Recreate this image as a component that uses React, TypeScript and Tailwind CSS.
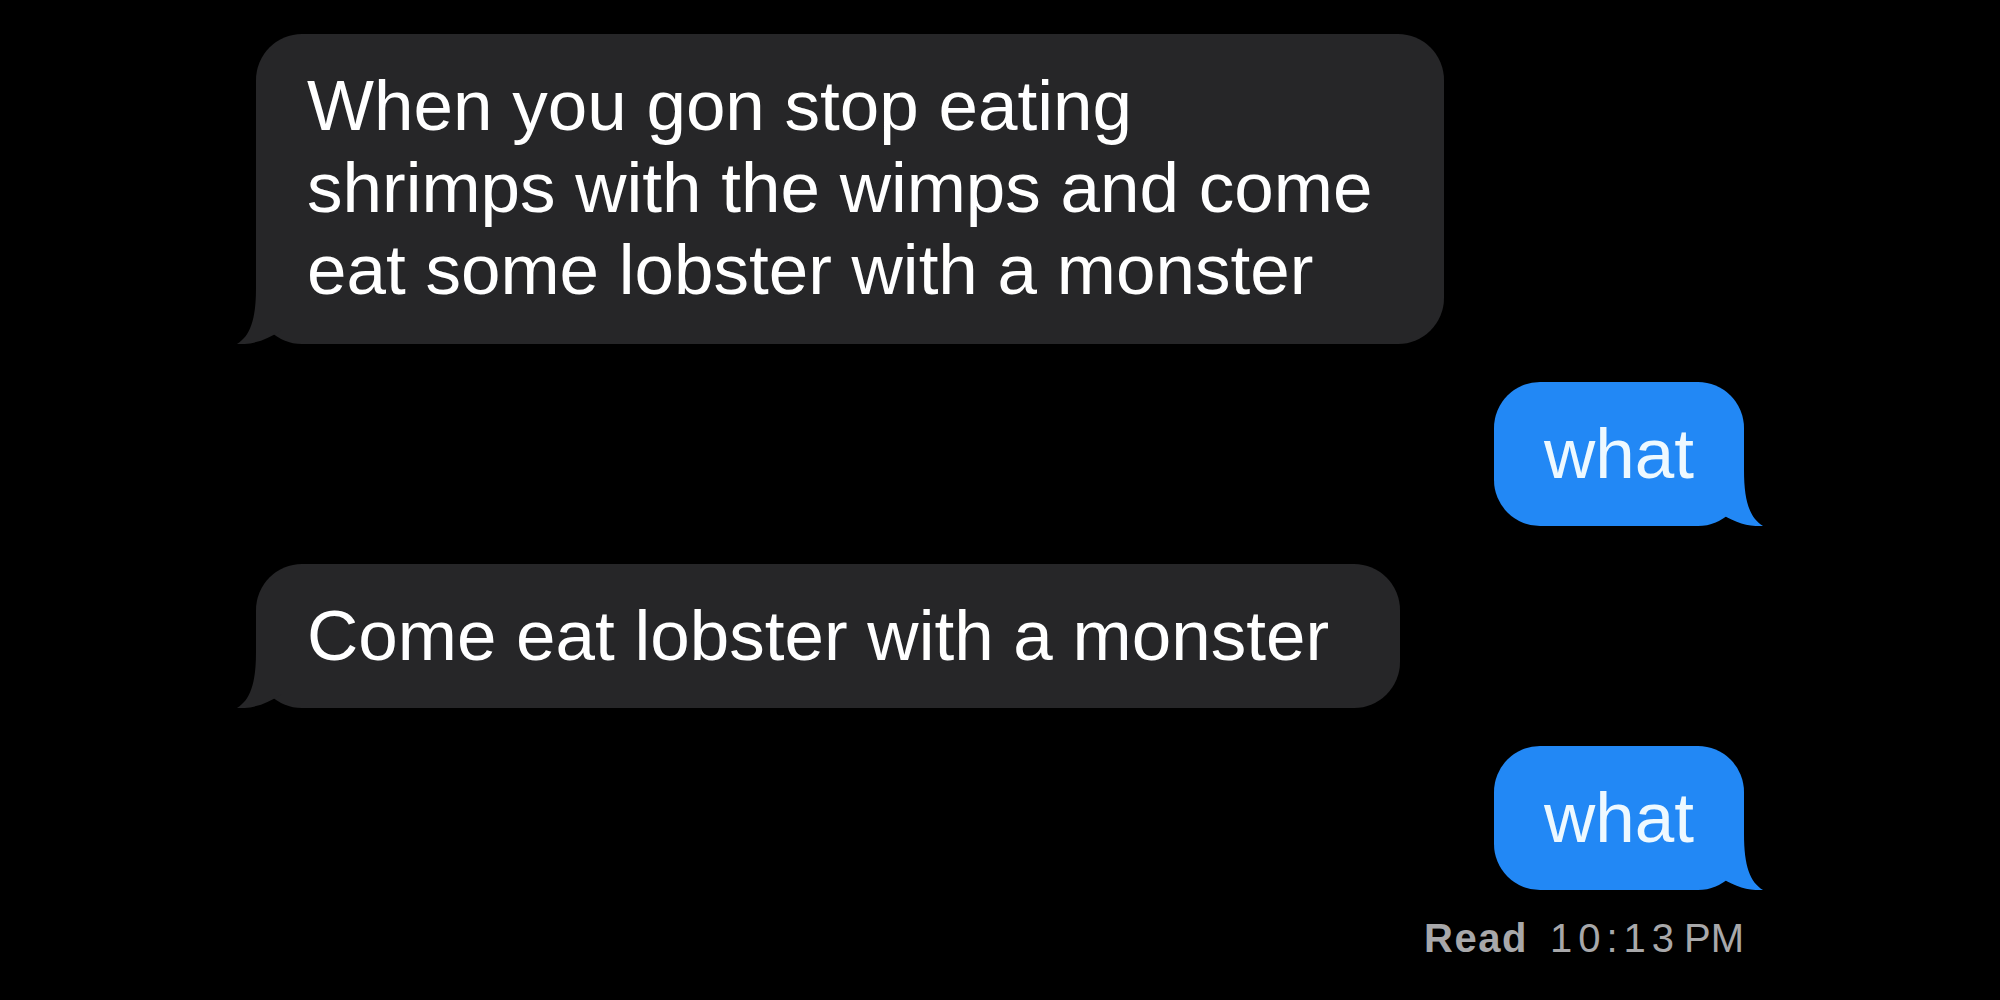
import React from "react";

type Msg = { from: "them" | "me"; lines: string[] };

const messages: Msg[] = [
  {
    from: "them",
    lines: [
      "When you gon stop eating",
      "shrimps with the wimps and come",
      "eat some lobster with a monster",
    ],
  },
  { from: "me", lines: ["what"] },
  { from: "them", lines: ["Come eat lobster with a monster"] },
  { from: "me", lines: ["what"] },
];

/* bubble tail, drawn for the left side; flipped for the right */
function Tail({ color, side }: { color: string; side: "left" | "right" }) {
  return (
    <svg
      width="70"
      height="60"
      viewBox="0 0 70 60"
      className={
        side === "left"
          ? "absolute left-[-20px] bottom-0"
          : "absolute right-[-20px] bottom-0 -scale-x-100"
      }
    >
      <path
        d="M20 4 C20 36 14 52 1 60 C16 61 31 56 46 46 L46 4 Z"
        fill={color}
      />
    </svg>
  );
}

function Bubble({ msg, width }: { msg: Msg; width: string }) {
  const mine = msg.from === "me";
  const color = mine ? "#2288f5" : "#262628";
  const pad = msg.lines.length > 1 ? "pt-[31px] pb-[33px]" : "pt-[31px] pb-[31px]";
  return (
    <div className={mine ? "flex justify-end" : "flex justify-start"}>
      <div
        className={
          mine
            ? `relative ${width} ${pad} rounded-[46px] bg-[#2288f5] text-center text-[#eef9ff]`
            : `relative ${width} ${pad} rounded-[46px] bg-[#262628] pl-[51px] text-white`
        }
      >
        <p className="text-[71px] leading-[82px] whitespace-nowrap">
          {msg.lines.map((l, i) => (
            <span key={i} className="block">
              {l}
            </span>
          ))}
        </p>
        <Tail color={color} side={mine ? "right" : "left"} />
      </div>
    </div>
  );
}

export default function App() {
  const widths = ["w-[1188px]", "w-[250px]", "w-[1144px]", "w-[250px]"];
  return (
    <main
      className="min-h-screen w-full bg-black px-[256px] pt-[34px]"
      style={{ fontFamily: '"Liberation Sans", Arial, sans-serif' }}
    >
      <div className="flex flex-col gap-[38px]">
        {messages.map((m, i) => (
          <Bubble key={i} msg={m} width={widths[i]} />
        ))}
      </div>

      <div className="mt-[28px] flex justify-end items-baseline text-[40px] leading-[40px] text-[#a8a8aa]">
        <span className="font-bold tracking-[1.5px]">Read</span>
        <span className="ml-[22px] tracking-[6px]">10:13</span>
        <span className="ml-[4px]">PM</span>
      </div>
    </main>
  );
}
